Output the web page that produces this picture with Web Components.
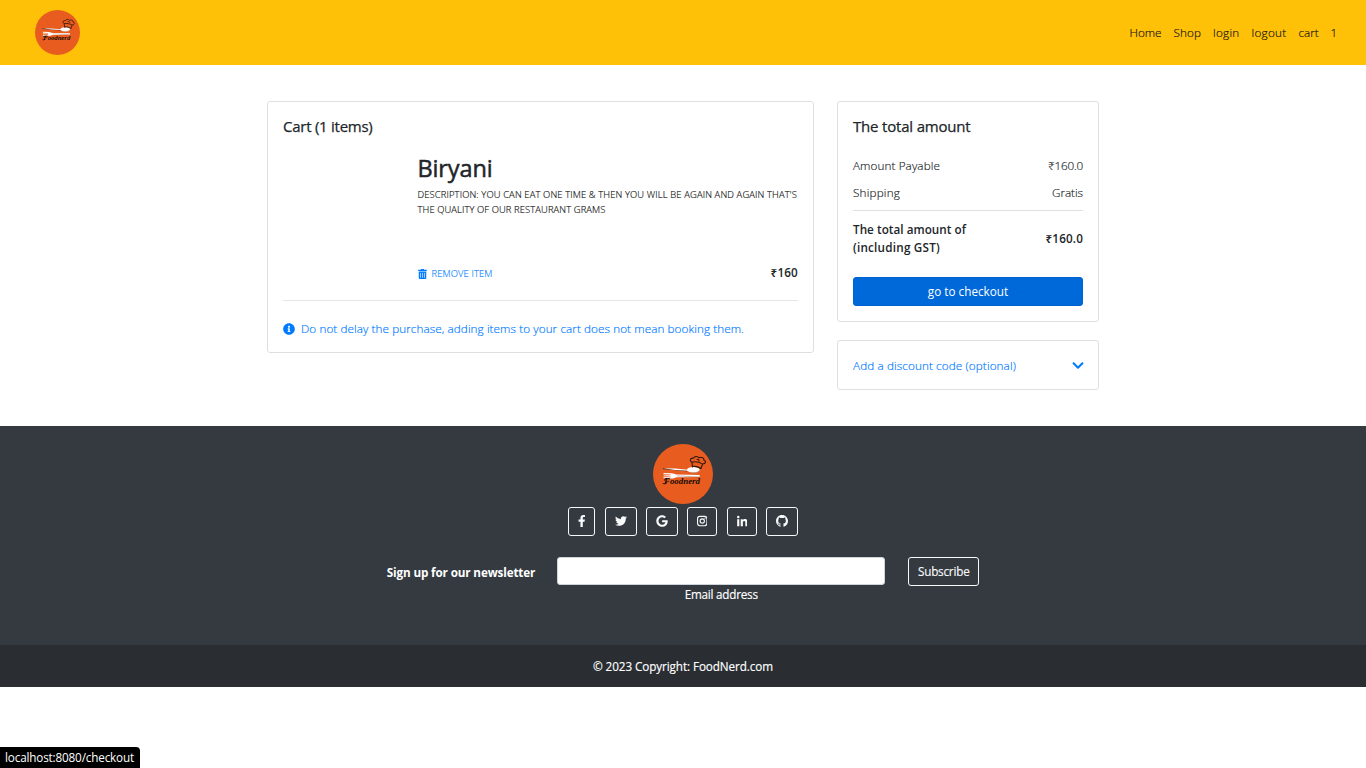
<!DOCTYPE html>
<html lang="en">
<head>
<meta charset="utf-8">
<title>FoodNerd cart</title>
<style>
html,body{margin:0;padding:0;background:#fff}
body{font:400 11.7px/18px "Open Sans","Noto Sans",sans-serif;color:#212529}
</style>
</head>
<body>
<shop-page></shop-page>
<script>
const define = (name, html, init) => customElements.define(name, class extends HTMLElement {
  connectedCallback() {
    if (this.shadowRoot) return;
    const t = document.createElement('template');
    t.innerHTML = typeof html === 'function' ? html(this) : html;
    this.attachShadow({mode: 'open'}).append(t.content.cloneNode(true));
    if (init) init(this);
  }
});

const ICONS = {
  facebook: ['0 0 320 512', '<path d="M279.14 288l14.22-92.66h-88.91v-60.13c0-25.35 12.42-50.06 52.24-50.06h40.42V6.26S260.43 0 225.36 0c-73.22 0-121.08 44.38-121.08 124.72v70.62H22.89V288h81.39v224h100.17V288z"/>'],
  twitter: ['0 0 512 512', '<path d="M459.37 151.716c.325 4.548.325 9.097.325 13.645 0 138.72-105.583 298.558-298.558 298.558-59.452 0-114.68-17.219-161.137-47.106 8.447.974 16.568 1.299 25.34 1.299 49.055 0 94.213-16.568 130.274-44.832-46.132-.975-84.792-31.188-98.112-72.772 6.498.974 12.995 1.624 19.818 1.624 9.421 0 18.843-1.3 27.614-3.573-48.081-9.747-84.143-51.98-84.143-102.985v-1.299c13.969 7.797 30.214 12.67 47.431 13.319-28.264-18.843-46.781-51.005-46.781-87.391 0-19.492 5.197-37.36 14.294-52.954 51.655 63.675 129.3 105.258 216.365 109.807-1.624-7.797-2.599-15.918-2.599-24.04 0-57.828 46.782-104.934 104.934-104.934 30.213 0 57.502 12.67 76.67 33.137 23.715-4.548 46.456-13.32 66.599-25.34-7.798 24.366-24.366 44.833-46.132 57.827 21.117-2.273 41.584-8.122 60.426-16.243-14.292 20.791-32.161 39.308-52.628 54.253z"/>'],
  google: ['0 0 488 512', '<path d="M488 261.8C488 403.3 391.1 504 248 504 110.8 504 0 393.2 0 256S110.8 8 248 8c66.8 0 123 24.5 166.3 64.9l-67.5 64.9C258.5 52.6 94.3 116.6 94.3 256c0 86.5 69.1 156.6 153.7 156.6 98.2 0 135-70.4 140.8-106.9H248v-85.3h236.1c2.3 12.7 3.9 24.9 3.9 41.4z"/>'],
  instagram: ['0 0 448 512', '<g fill="none" stroke="currentColor" stroke-width="48"><rect x="24" y="56" width="400" height="400" rx="100"/><circle cx="224" cy="256" r="92"/></g><circle cx="344" cy="136" r="29"/>'],
  linkedin: ['0 0 448 512', '<path transform="translate(0 32)" d="M100.28 448H7.4V148.9h92.88zM53.79 108.1C24.09 108.1 0 83.5 0 53.8a53.79 53.79 0 0 1 107.58 0c0 29.7-24.1 54.3-53.79 54.3zM447.9 448h-92.68V302.4c0-34.7-.7-79.2-48.29-79.2-48.29 0-55.69 37.7-55.69 76.7V448h-92.78V148.9h89.08v40.8h1.3c12.4-23.5 42.69-48.3 87.88-48.3 94 0 111.28 61.9 111.28 142.3V448z"/>'],
  github: ['0 0 16 16', '<path d="M8 0C3.58 0 0 3.58 0 8c0 3.54 2.29 6.53 5.47 7.59.4.07.55-.17.55-.38 0-.19-.01-.82-.01-1.49-2.01.37-2.53-.49-2.69-.94-.09-.23-.48-.94-.82-1.13-.28-.15-.68-.52-.01-.53.63-.01 1.08.58 1.23.82.72 1.21 1.87.87 2.33.66.07-.52.28-.87.51-1.07-1.78-.2-3.64-.89-3.64-3.95 0-.87.31-1.59.82-2.15-.08-.2-.36-1.02.08-2.12 0 0 .67-.21 2.2.82.64-.18 1.32-.27 2-.27.68 0 1.36.09 2 .27 1.53-1.04 2.2-.82 2.2-.82.44 1.1.16 1.92.08 2.12.51.56.82 1.27.82 2.15 0 3.07-1.87 3.75-3.65 3.95.29.25.54.73.54 1.48 0 1.07-.01 1.93-.01 2.2 0 .21.15.46.55.38A8.013 8.013 0 0 0 16 8c0-4.42-3.58-8-8-8z"/>'],
  chevron: ['0 0 448 512', '<path d="M207.029 381.476L12.686 187.132c-9.373-9.373-9.373-24.569 0-33.941l22.667-22.667c9.357-9.357 24.522-9.375 33.901-.04L224 284.505l154.745-154.021c9.379-9.335 24.544-9.317 33.901.04l22.667 22.667c9.373 9.373 9.373 24.569 0 33.941L240.971 381.476c-9.373 9.372-24.569 9.372-33.942 0z"/>'],
  info: ['0 0 512 512', '<path d="M256 8C119.043 8 8 119.083 8 256c0 136.997 111.043 248 248 248s248-111.003 248-248C504 119.083 392.957 8 256 8zm0 110c23.196 0 42 18.804 42 42s-18.804 42-42 42-42-18.804-42-42 18.804-42 42-42zm56 254c0 6.627-5.373 12-12 12h-88c-6.627 0-12-5.373-12-12v-24c0-6.627 5.373-12 12-12h12v-64h-12c-6.627 0-12-5.373-12-12v-24c0-6.627 5.373-12 12-12h64c6.627 0 12 5.373 12 12v100h12c6.627 0 12 5.373 12 12v24z"/>'],
  trash: ['0 0 448 512', '<path d="M32 464a48 48 0 0 0 48 48h288a48 48 0 0 0 48-48V128H32zm272-256a16 16 0 0 1 32 0v224a16 16 0 0 1-32 0zm-96 0a16 16 0 0 1 32 0v224a16 16 0 0 1-32 0zm-96 0a16 16 0 0 1 32 0v224a16 16 0 0 1-32 0zM432 32H312l-9.4-18.7A24 24 0 0 0 281.1 0H166.8a23.72 23.72 0 0 0-21.4 13.3L136 32H16A16 16 0 0 0 0 48v32a16 16 0 0 0 16 16h416a16 16 0 0 0 16-16V48a16 16 0 0 0-16-16z"/>']
};

define('ui-icon', el => {
  const [box, body] = ICONS[el.getAttribute('name')];
  return `<style>:host{display:block;flex:none}svg{display:block;width:100%;height:100%;fill:currentColor}</style><svg viewBox="${box}">${body}</svg>`;
});

/* One line of text, tracked so that it fills the width given in "w". */
define('ui-line', `<style>:host{display:flow-root;flex:none;white-space:nowrap}span{display:block;width:max-content;margin:var(--lift,-1px) 0 calc(0px - var(--lift,-1px));-webkit-text-stroke:var(--ink,0)}</style><span><slot></slot></span>`, el => {
  const w = +el.getAttribute('w'), span = el.shadowRoot.querySelector('span');
  const n = el.textContent.length;
  el.style.width = w + 'px';
  span.style.letterSpacing = (w - span.getBoundingClientRect().width) / n + 'px';
});

define('ui-card', `<style>:host{display:flow-root;box-sizing:border-box;border:1px solid #dfdfdf;border-radius:3px;padding:15px;background:#fff}</style><slot></slot>`);

define('brand-logo', `<style>:host{display:block;flex:none}svg{display:block;width:100%;height:100%}</style>
<svg viewBox="0 0 60 60"><circle cx="30" cy="30" r="30" fill="#e85d1f"/>
<path d="M10 24.600l24 2.200" stroke="#2b211f" stroke-width=".9"/>
<path d="M10 24.200l12 .3 13 1.300v1l-13-.9z" fill="#fff"/>
<ellipse cx="40.300" cy="25.700" rx="6.300" ry="2.800" fill="#fff"/><path d="M37 28.300c3 .8 7 .5 9.300-1.200" fill="none" stroke="#a8a29f" stroke-width=".6"/>
<path d="M10.500 29l8 .3c2 .1 3.500.8 5 1.300l23.200.5v2l-23.200.1c-2 .9-3.500 1.300-5 1.300l-8-.3v-.9l7-.1v-.7l-7-.2v-.9l7-.1v-.7l-7-.4z" fill="#fff"/>
<path d="M24 31.900l23 1.100" stroke="#6d4436" stroke-width=".4"/>
<g fill="none" stroke="#32180e" stroke-width="1.100" stroke-linecap="round" stroke-linejoin="round"><path d="M39.500 23l-.6-5c-2.700-.8-1.700-4.700 1.500-3.700 1-2.300 4.500-2.300 5.300-.6 3-1.100 5.800.3 5.200 2.600 2.600.6 2 3.300-1.300 3.700l-1.600 4.500M39 18.200c3-.8 7.500 0 10.300 1.700M39.700 22.500c2.700-.4 5.800.3 8 2M44 15.300c1.400-.2 2.200.6 2 1.600"/></g>
<text x="11" y="39.600" textLength="36" lengthAdjust="spacingAndGlyphs" font-family="Liberation Serif,serif" font-style="italic" font-weight="700" font-size="7.600" fill="#170b06">Foodnerd</text>
<path d="M11.500 36.500c-1-1.500 1.500-2 5-1.700M9.800 39c.5 1.500 2.800 1 3.700-.6" fill="none" stroke="#170b06" stroke-width=".9"/></svg>`);

define('site-header', `<style>
:host{display:flex;height:65px;box-sizing:border-box;background:#ffc107;padding:0 29px 0 35px;align-items:center;justify-content:space-between;font-weight:300;color:#111;--ink:.17px}
brand-logo{width:45px;height:45px}nav{display:flex;gap:12px}ui-line{margin-top:1px}</style>
<brand-logo></brand-logo><nav><ui-line w="32">Home</ui-line><ui-line w="27.500">Shop</ui-line><ui-line w="26.500">login</ui-line><ui-line w="35">logout</ui-line><ui-line w="20">cart</ui-line><ui-line w="6.500">1</ui-line></nav>`);

define('cart-list', `<style>
:host{display:block}ui-card{height:252px}
.title{font:500 15px/20px "Open Sans",sans-serif;--ink:.25px}
.item{margin:18px 0 0 134.500px;height:128px;display:flex;flex-direction:column}
.name{font:500 23.500px/28px "Open Sans",sans-serif;--ink:.5px}
.desc{margin-top:4px;font-size:9.400px;line-height:15px;font-weight:300;color:#111;--lift:0px;--ink:.15px}
.row{display:flex;justify-content:space-between;margin-top:auto}
a{display:flex;align-items:center;color:#007bff}
.rm{font-size:9.400px;font-weight:300;--lift:0px;--ink:.12px}
.rm ui-icon{width:9px;height:10px;margin:1px 5px 0 0}
.rm ui-line{margin-top:1px}
b{font-weight:600}
hr{border:0;border-top:1px solid #e5e5e5;margin:17px 0 19px}
.note{font-weight:300;--ink:.17px}.note ui-icon{width:12px;height:12px;margin:-1px 6px 0 0}
</style><ui-card><ui-line class="title" w="89.500">Cart (1 items)</ui-line>
<div class="item"><ui-line class="name" w="75">Biryani</ui-line>
<div class="desc"><ui-line w="379.500">DESCRIPTION: YOU CAN EAT ONE TIME &amp; THEN YOU WILL BE AGAIN AND AGAIN THAT'S</ui-line><ui-line w="188">THE QUALITY OF OUR RESTAURANT GRAMS</ui-line></div>
<div class="row"><a class="rm"><ui-icon name="trash"></ui-icon><ui-line w="61">REMOVE ITEM</ui-line></a><b><ui-line w="27.500">₹160</ui-line></b></div></div>
<hr><a class="note"><ui-icon name="info"></ui-icon><ui-line w="443">Do not delay the purchase, adding items to your cart does not mean booking them.</ui-line></a></ui-card>`);

define('order-summary', `<style>
:host{display:flex;flex-direction:column;gap:18px}
.total{height:221px}.title{font:500 15px/20px "Open Sans",sans-serif;margin-bottom:20px;--ink:.25px}
.row{display:flex;justify-content:space-between;align-items:center;font-weight:300;--ink:.17px}
.ship{margin-top:9px;padding-bottom:8px;border-bottom:1px solid #dfdfdf}
.sum{margin:10px 0 20px;font-weight:600;--ink:0}
button{display:flex;justify-content:center;align-items:center;width:100%;height:29px;padding:0;border:1px solid #0062cc;border-radius:3px;background:#0069d9;color:#fff;font:inherit}
.code{height:50px;color:#007bff;font-weight:300;padding:16px 14px 0 15px;--ink:.17px}
.code div{display:flex;align-items:center;justify-content:space-between}
.code ui-icon{width:12px;height:13px;margin-top:-1px}
</style><ui-card class="total"><ui-line class="title" w="117.500">The total amount</ui-line>
<div class="row"><ui-line w="87">Amount Payable</ui-line><ui-line w="35">₹160.0</ui-line></div>
<div class="row ship"><ui-line w="47">Shipping</ui-line><ui-line w="31">Gratis</ui-line></div>
<div class="row sum"><div><ui-line w="113">The total amount of</ui-line><ui-line w="87">(including GST)</ui-line></div><ui-line w="37.500">₹160.0</ui-line></div>
<button><ui-line w="80.500">go to checkout</ui-line></button></ui-card>
<ui-card class="code"><div><ui-line w="163">Add a discount code (optional)</ui-line><ui-icon name="chevron"></ui-icon></div></ui-card>`);

define('social-button', el => `<style>
:host{display:flex;box-sizing:border-box;height:29px;border:1px solid #f8f9fa;border-radius:3px;align-items:center;justify-content:center;color:#f8f9fa}
ui-icon{height:12px;width:${el.getAttribute('iw')}px;margin-top:-.5px}</style><ui-icon name="${el.getAttribute('icon')}"></ui-icon>`,
  el => { el.style.width = el.getAttribute('w') + 'px'; });

define('site-footer', `<style>
:host{display:block;color:#fff;background:#343a40;--ink:.15px}
.main{height:219px;box-sizing:border-box;padding-top:18px;display:flex;flex-direction:column;align-items:center}
brand-logo{width:60px;height:60px}
.social{display:flex;margin-top:3px}
.social>*{margin-left:9px}.social>:first-child{margin-left:0}.social>:nth-child(2){margin-left:10px}.social>:nth-child(5){margin-left:10px}
form{display:flex;align-items:flex-start;margin:21px 0 0}
.label{font-weight:700;margin:7px 22px 0 0;--ink:0}
.field{display:flex;flex-direction:column;align-items:center}
input{box-sizing:border-box;width:328px;height:28px;border:1px solid #ced4da;border-radius:3px;background:#fff;padding:0;margin:0 0 1px}
button{height:29px;width:71px;margin:0 0 0 23px;padding:0;border:1px solid #f8f9fa;border-radius:3px;background:none;color:#f8f9fa;font:inherit;display:flex;align-items:center;justify-content:center}
.copy{height:42px;display:flex;align-items:center;justify-content:center;background:#2a2e33;padding-top:2px;box-sizing:border-box}
</style><div class="main"><brand-logo></brand-logo>
<div class="social"><social-button w="27" icon="facebook" iw="7.500"></social-button><social-button w="32" icon="twitter" iw="12"></social-button><social-button w="32" icon="google" iw="12"></social-button><social-button w="30" icon="instagram" iw="10.500"></social-button><social-button w="30" icon="linkedin" iw="10.500"></social-button><social-button w="32" icon="github" iw="12"></social-button></div>
<form><ui-line class="label" w="148.500">Sign up for our newsletter</ui-line><div class="field"><input type="email" aria-label="Email address"><ui-line w="73">Email address</ui-line></div><button type="button"><ui-line w="51.500">Subscribe</ui-line></button></form></div>
<div class="copy"><ui-line w="180">© 2023 Copyright: FoodNerd.com</ui-line></div>`);

define('status-bubble', `<style>:host{display:block;position:fixed;left:0;bottom:0;height:21px;width:140px;box-sizing:border-box;padding:2px 5px 0;background:#000;color:#fff;border-top-right-radius:4px;line-height:18px}</style><ui-line w="129">localhost:8080/checkout</ui-line>`);

define('shop-page', `<style>:host{display:block}
main{display:grid;grid-template-columns:547px 262px;column-gap:23px;justify-content:center;align-items:start;padding:36px 0}
</style><site-header></site-header><main><cart-list></cart-list><order-summary></order-summary></main><site-footer></site-footer><status-bubble></status-bubble>`);
</script>
</body>
</html>
